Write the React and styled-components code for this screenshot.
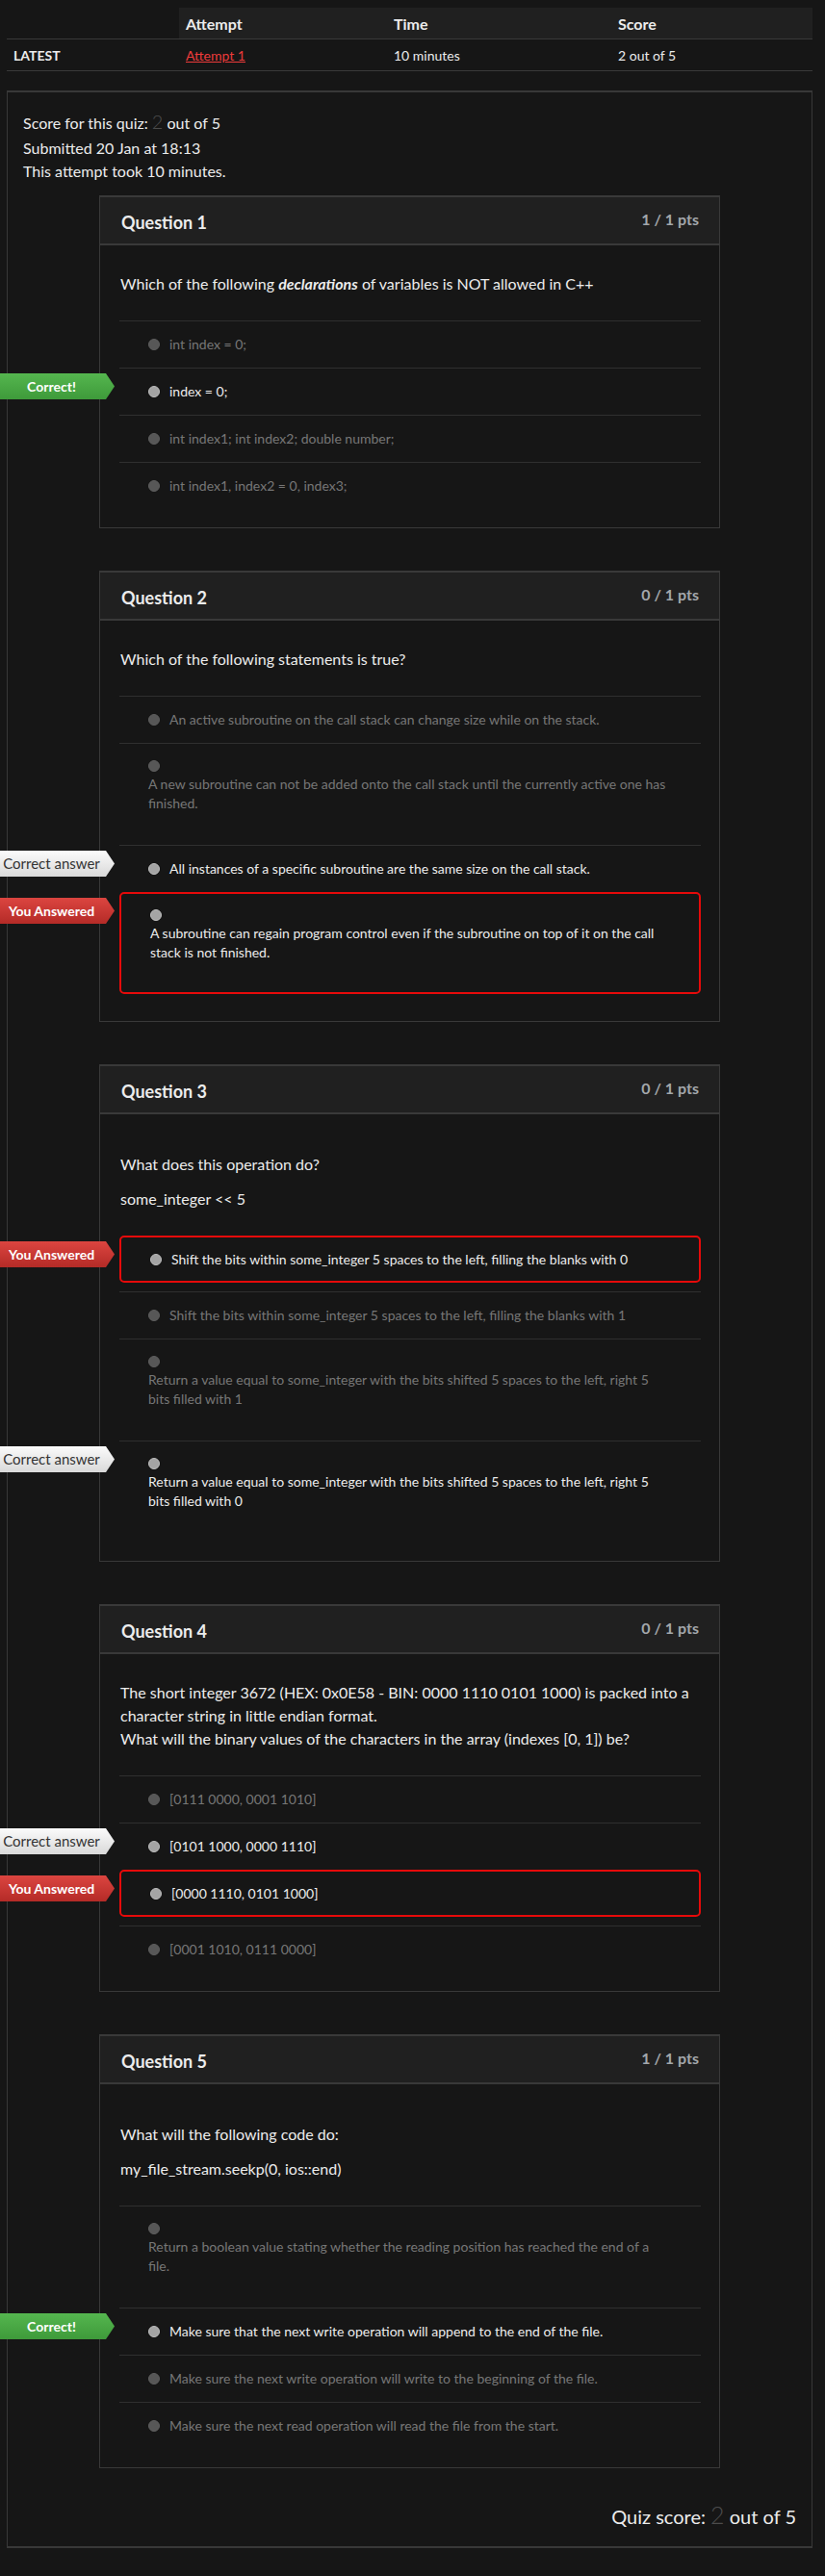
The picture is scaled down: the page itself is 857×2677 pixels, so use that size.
import styled, { createGlobalStyle, css } from "styled-components";

const GlobalStyle = createGlobalStyle`
  html, body {
    margin: 0;
    background: #161616;
  }
  body {
    font-family: Lato, "Open Sans", "Liberation Sans", sans-serif;
    color: #ececec;
  }
`;

const questions = [
  {
    id: 1,
    pts: "1 / 1 pts",
    text: [
      <>
        Which of the following{" "}
        <strong>
          <em>declarations</em>
        </strong>{" "}
        of variables is NOT allowed in C++
      </>,
    ],
    answers: [
      { text: "int index = 0;" },
      { text: "index = 0;", bright: true, label: "correct" },
      { text: "int index1; int index2; double number;" },
      { text: "int index1, index2 = 0, index3;" },
    ],
  },
  {
    id: 2,
    pts: "0 / 1 pts",
    text: ["Which of the following statements is true?"],
    answers: [
      {
        text: "An active subroutine on the call stack can change size while on the stack.",
      },
      {
        text: "A new subroutine can not be added onto the call stack until the currently active one has finished.",
        wrap: true,
      },
      {
        text: "All instances of a specific subroutine are the same size on the call stack.",
        bright: true,
        label: "answer",
      },
      {
        text: "A subroutine can regain program control even if the subroutine on top of it on the call stack is not finished.",
        bright: true,
        picked: true,
        label: "wrong",
        wrap: true,
      },
    ],
  },
  {
    id: 3,
    pts: "0 / 1 pts",
    paragraphs: true,
    text: ["What does this operation do?", "some_integer << 5"],
    answers: [
      {
        text: "Shift the bits within some_integer 5 spaces to the left, filling the blanks with 0",
        bright: true,
        picked: true,
        label: "wrong",
      },
      {
        text: "Shift the bits within some_integer 5 spaces to the left, filling the blanks with 1",
      },
      {
        text: "Return a value equal to some_integer with the bits shifted 5 spaces to the left, right 5 bits filled with 1",
        wrap: true,
      },
      {
        text: "Return a value equal to some_integer with the bits shifted 5 spaces to the left, right 5 bits filled with 0",
        bright: true,
        wrap: true,
        label: "answer",
      },
    ],
  },
  {
    id: 4,
    pts: "0 / 1 pts",
    text: [
      <>
        The short integer 3672 (HEX: 0x0E58 - BIN: 0000 1110 0101 1000) is
        packed into a character string in little endian format.
        <br />
        What will the binary values of the characters in the array (indexes
        [0, 1]) be?
      </>,
    ],
    answers: [
      { text: "[0111 0000, 0001 1010]" },
      { text: "[0101 1000, 0000 1110]", bright: true, label: "answer" },
      {
        text: "[0000 1110, 0101 1000]",
        bright: true,
        picked: true,
        label: "wrong",
      },
      { text: "[0001 1010, 0111 0000]" },
    ],
  },
  {
    id: 5,
    pts: "1 / 1 pts",
    paragraphs: true,
    text: [
      "What will the following code do:",
      "my_file_stream.seekp(0, ios::end)",
    ],
    answers: [
      {
        text: "Return a boolean value stating whether the reading position has reached the end of a file.",
        wrap: true,
      },
      {
        text: "Make sure that the next write operation will append to the end of the file.",
        bright: true,
        label: "correct",
      },
      {
        text: "Make sure the next write operation will write to the beginning of the file.",
      },
      {
        text: "Make sure the next read operation will read the file from the start.",
      },
    ],
  },
];

const labelText = {
  correct: "Correct!",
  answer: "Correct answer",
  wrong: "You Answered",
};

function Answer({ answer }) {
  return (
    <AnswerRow $picked={answer.picked}>
      {answer.label && (
        <Flag $kind={answer.label} $picked={answer.picked}>
          {labelText[answer.label]}
        </Flag>
      )}
      <AnswerInner $wrap={answer.wrap}>
        <BulletLine $wrap={answer.wrap}>
          <Bullet $bright={answer.bright} />
        </BulletLine>
        <AnswerText $bright={answer.bright} $wrap={answer.wrap}>
          {answer.text}
        </AnswerText>
      </AnswerInner>
    </AnswerRow>
  );
}

function Question({ q }) {
  return (
    <QuestionBox>
      <QuestionHeader>
        <QuestionTitle>Question {q.id}</QuestionTitle>
        <Points>{q.pts}</Points>
      </QuestionHeader>
      <QuestionBody>
        <QuestionText>
          {q.text.map((t, i) => (
            <TextPart key={i} $p={q.paragraphs}>
              {t}
            </TextPart>
          ))}
        </QuestionText>
        <Answers>
          {q.answers.map((a, i) => (
            <Answer key={i} answer={a} />
          ))}
        </Answers>
      </QuestionBody>
    </QuestionBox>
  );
}

export default function App() {
  return (
    <>
      <GlobalStyle />
      <Page>
        <AttemptTable>
          <thead>
            <tr>
              <HeadCell $empty $w={165} />
              <HeadCell $w={202}>Attempt</HeadCell>
              <HeadCell $w={219}>Time</HeadCell>
              <HeadCell>Score</HeadCell>
            </tr>
          </thead>
          <tbody>
            <tr>
              <RowHead>LATEST</RowHead>
              <Cell>
                <AttemptLink href="#">Attempt 1</AttemptLink>
              </Cell>
              <Cell>10 minutes</Cell>
              <Cell>2 out of 5</Cell>
            </tr>
          </tbody>
        </AttemptTable>

        <ResultBox>
          <ScoreLine>
            Score for this quiz: <BigScore>2</BigScore> out of 5
          </ScoreLine>
          <InfoLine>Submitted 20 Jan at 18:13</InfoLine>
          <InfoLine>This attempt took 10 minutes.</InfoLine>

          <QuestionList>
            {questions.map((q) => (
              <Question key={q.id} q={q} />
            ))}
          </QuestionList>

          <QuizScore>
            Quiz score: <BigScore>2</BigScore> out of 5
          </QuizScore>
        </ResultBox>
      </Page>
    </>
  );
}

const Page = styled.div`
  padding: 8px 13px 8px 7px;
`;

const AttemptTable = styled.table`
  width: 100%;
  border-collapse: collapse;
  font-size: 14px;
  text-align: left;
`;

const HeadCell = styled.th`
  width: ${(p) => (p.$w ? `${p.$w}px` : "auto")};
  height: 32px;
  padding: 0 7px;
  font-size: 16px;
  font-weight: 700;
  color: #ececec;
  background: ${(p) => (p.$empty ? "transparent" : "#202020")};
  border-bottom: 1px solid #393939;
`;

const RowHead = styled.th`
  height: 32px;
  padding: 0 7px;
  font-weight: 700;
  border-bottom: 1px solid #393939;
`;

const Cell = styled.td`
  height: 32px;
  padding: 0 7px;
  border-bottom: 1px solid #393939;
`;

const AttemptLink = styled.a`
  color: #ee3b3b;
  text-decoration: underline;
`;

const ResultBox = styled.div`
  margin-top: 20px;
  border: 1px solid #383838;
  border-top-width: 2px;
  border-bottom-width: 2px;
  padding: 16px;
  font-size: 16px;
`;

const ScoreLine = styled.div`
  line-height: 28px;
`;

const InfoLine = styled.div`
  line-height: 24px;
`;

const BigScore = styled.span`
  font-size: 1.25em;
  font-weight: 300;
  color: #4c4c4c;
`;

const QuestionList = styled.div`
  display: flex;
  flex-direction: column;
  gap: 44px;
  margin: 13px 79px 0;
`;

const QuestionBox = styled.div`
  border: 1px solid #393939;
  border-top-width: 2px;
  background: #161616;
`;

const QuestionHeader = styled.div`
  display: flex;
  justify-content: space-between;
  align-items: flex-start;
  height: 48px;
  padding: 0 21px 0 22px;
  background: #202020;
  border-bottom: 2px solid #393939;
`;

const QuestionTitle = styled.div`
  margin-top: 14px;
  font-size: 18px;
  font-weight: 700;
  line-height: 24px;
  color: #ececec;
`;

const Points = styled.div`
  margin-top: 11px;
  font-size: 16px;
  font-weight: 700;
  line-height: 24px;
  color: #a3a7ab;
`;

const QuestionBody = styled.div`
  padding: 28px 19px 19px 20px;
`;

const QuestionText = styled.div`
  font-size: 16px;
  line-height: 24px;
  color: #ececec;
  padding-left: 1px;
`;

const TextPart = styled.p`
  margin: ${(p) => (p.$p ? "12px 0" : "0")};
`;

const Answers = styled.div`
  margin-top: 26px;
`;

const AnswerRow = styled.div`
  position: relative;
  font-size: 14px;
  line-height: 20px;
  ${(p) =>
    p.$picked
      ? css`
          border: 2px solid #e60a0a;
          border-radius: 5px;
          padding: 13px 0 12px 30px;
          margin-bottom: 9px;
        `
      : css`
          border-top: 1px solid #2f2f2f;
          padding: 14px 0 14px 30px;
        `}
`;

const AnswerInner = styled.div`
  display: flex;
  flex-direction: ${(p) => (p.$wrap ? "column" : "row")};
  align-items: ${(p) => (p.$wrap ? "flex-start" : "center")};
  gap: ${(p) => (p.$wrap ? "0" : "10px")};
`;

const BulletLine = styled.div`
  display: flex;
  align-items: center;
  height: ${(p) => (p.$wrap ? "18px" : "20px")};
`;

const Bullet = styled.span`
  display: block;
  width: 12px;
  height: 12px;
  border-radius: 50%;
  box-sizing: border-box;
  background: ${(p) => (p.$bright ? "#a4a4a4" : "#575757")};
  border: 1px solid ${(p) => (p.$bright ? "#bdbdbd" : "#5e5e5e")};
`;

const AnswerText = styled.div`
  color: ${(p) => (p.$bright ? "#ececec" : "#767676")};
  ${(p) =>
    p.$wrap &&
    css`
      max-width: 543px;
      padding-bottom: 19px;
    `}
`;

const flagSkins = {
  correct: css`
    background: linear-gradient(#55b64f, #3e9a3a);
    color: #fff;
    font-weight: 700;
    font-size: 14px;
  `,
  answer: css`
    background: linear-gradient(#fbfbfb, #d9d9d9);
    color: #333;
    font-weight: 400;
    font-size: 15px;
  `,
  wrong: css`
    background: linear-gradient(#dc4540, #b42b27);
    color: #fff;
    font-weight: 700;
    font-size: 14px;
  `,
};

const Flag = styled.div`
  position: absolute;
  left: ${(p) => (p.$picked ? "-126px" : "-124px")};
  top: ${(p) => (p.$picked ? "4px" : "5px")};
  width: 119px;
  height: 27px;
  box-sizing: border-box;
  padding-right: 12px;
  text-align: center;
  line-height: 27px;
  white-space: nowrap;
  clip-path: polygon(0 0, 110px 0, 119px 50%, 110px 100%, 0 100%);
  ${(p) => flagSkins[p.$kind]}
`;

const QuizScore = styled.div`
  margin-top: 33px;
  text-align: right;
  font-size: 20px;
  line-height: 30px;
`;
